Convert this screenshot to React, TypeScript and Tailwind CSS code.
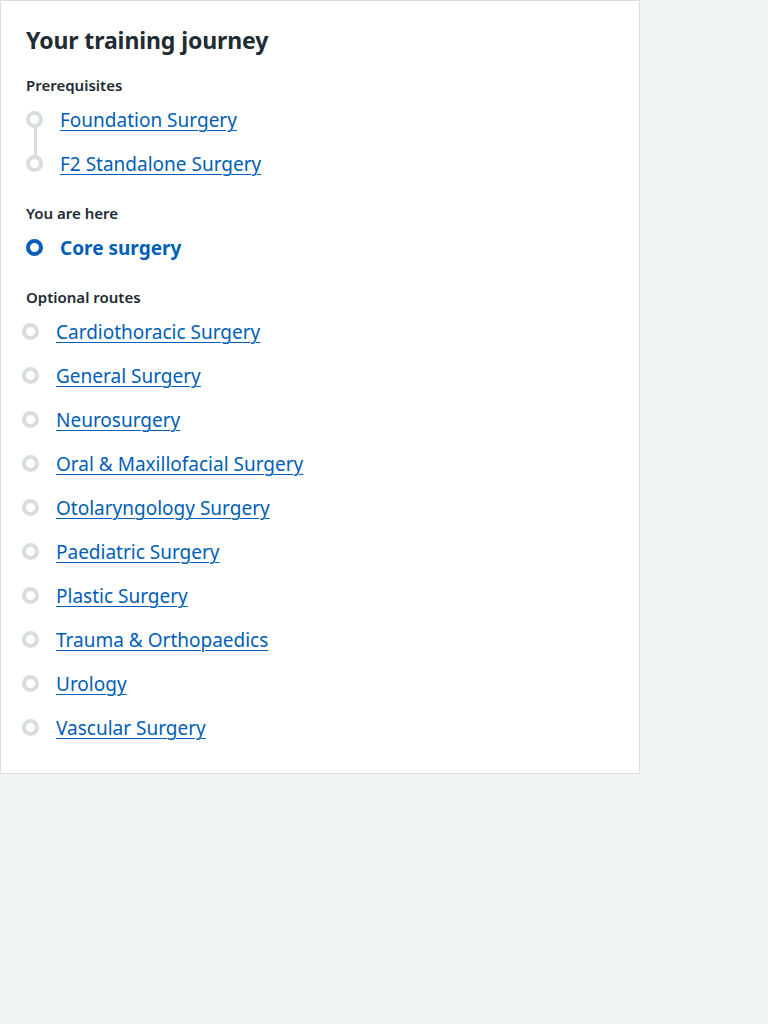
import React from "react";

const prereqs = ["Foundation Surgery", "F2 Standalone Surgery"];
const optional = [
  "Cardiothoracic Surgery",
  "General Surgery",
  "Neurosurgery",
  "Oral & Maxillofacial Surgery",
  "Otolaryngology Surgery",
  "Paediatric Surgery",
  "Plastic Surgery",
  "Trauma & Orthopaedics",
  "Urology",
  "Vascular Surgery",
];

const font = { fontFamily: '"Noto Sans", "Open Sans", sans-serif' };

export default function App() {
  return (
    <div className="min-h-[1024px] w-full bg-[#f0f4f5]" style={font}>
      <div className="w-[640px] border border-[#d8dde0] bg-white pl-[25px] pr-6 pt-[23px] pb-[24px] text-[#212b32]">
        <h2 className="text-[23px] leading-[32px] font-bold tracking-[-0.1px]">Your training journey</h2>

        <div className="mt-[17px] text-[15px] leading-[24px] font-semibold">Prerequisites</div>
        <ul className="relative">
          <span className="absolute left-[8px] top-[22px] h-[44px] w-[3px] bg-[#d8dde0]" />
          {prereqs.map((p) => (
            <li key={p} className="relative flex h-11 items-center">
              <span className="box-border h-[17px] w-[17px] shrink-0 rounded-full border-[4px] border-[#d8dde0] bg-white" />
              <a href="#" className="ml-[17px] pt-[2px] text-[19px] leading-[28px] text-[#005eb8] underline decoration-1 underline-offset-[3px]">
                {p}
              </a>
            </li>
          ))}
        </ul>

        <div className="mt-[16px] text-[15px] leading-[24px] font-semibold">You are here</div>
        <div className="flex h-11 items-center">
          <span className="box-border h-[17px] w-[17px] shrink-0 rounded-full border-[4px] border-[#005eb8] bg-white" />
          <span className="ml-[17px] pt-[2px] text-[19px] leading-[28px] font-bold text-[#005eb8]">Core surgery</span>
        </div>

        <div className="mt-[16px] text-[15px] leading-[24px] font-semibold">Optional routes</div>
        <ul className="-ml-[4px]">
          {optional.map((p) => (
            <li key={p} className="flex h-11 items-center">
              <span className="box-border h-[17px] w-[17px] shrink-0 rounded-full border-[4px] border-[#d8dde0] bg-white" />
              <a href="#" className="ml-[17px] pt-[2px] text-[19px] leading-[28px] text-[#005eb8] underline decoration-1 underline-offset-[3px]">
                {p}
              </a>
            </li>
          ))}
        </ul>
      </div>
    </div>
  );
}
